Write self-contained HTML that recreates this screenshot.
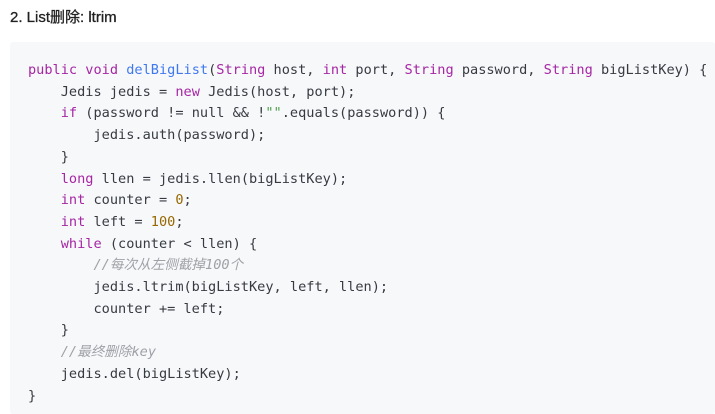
<!DOCTYPE html>
<html><head><meta charset="utf-8"><style>
body{margin:0;background:#fff;width:715px;height:414px;overflow:hidden;font-family:"Liberation Sans","Noto Sans CJK SC",sans-serif;}
.t{position:absolute;left:10px;top:6px;font-size:15px;color:#222;-webkit-text-stroke:0.3px #222;}
.b{position:absolute;left:10px;top:42px;width:705px;height:372px;background:#f6f8fa;border-radius:3px;}
pre{position:absolute;left:28px;top:60px;margin:0;font-family:"DejaVu Sans Mono","Noto Sans CJK SC",monospace;font-size:13.6px;line-height:21.7px;color:#383a42;}
.k{color:#a626a4}.f{color:#4078f2}.n{color:#986801}.c{color:#a0a1a7;font-style:italic}.s{color:#50a14f}
</style></head><body>
<div class="t">2. List删除: ltrim</div>
<div class="b"></div>
<pre><span class="k">public</span> <span class="k">void</span> <span class="f">delBigList</span>(<span class="k">String</span> host, <span class="k">int</span> port, <span class="k">String</span> password, <span class="k">String</span> bigListKey) {
    Jedis jedis = <span class="k">new</span> Jedis(host, port);
    <span class="k">if</span> (password != null &amp;&amp; !<span class="s">""</span>.equals(password)) {
        jedis.auth(password);
    }
    <span class="k">long</span> llen = jedis.llen(bigListKey);
    <span class="k">int</span> counter = <span class="n">0</span>;
    <span class="k">int</span> left = <span class="n">100</span>;
    <span class="k">while</span> (counter &lt; llen) {
        <span class="c">//每次从左侧截掉100个</span>
        jedis.ltrim(bigListKey, left, llen);
        counter += left;
    }
    <span class="c">//最终删除key</span>
    jedis.del(bigListKey);
}</pre>
</body></html>
